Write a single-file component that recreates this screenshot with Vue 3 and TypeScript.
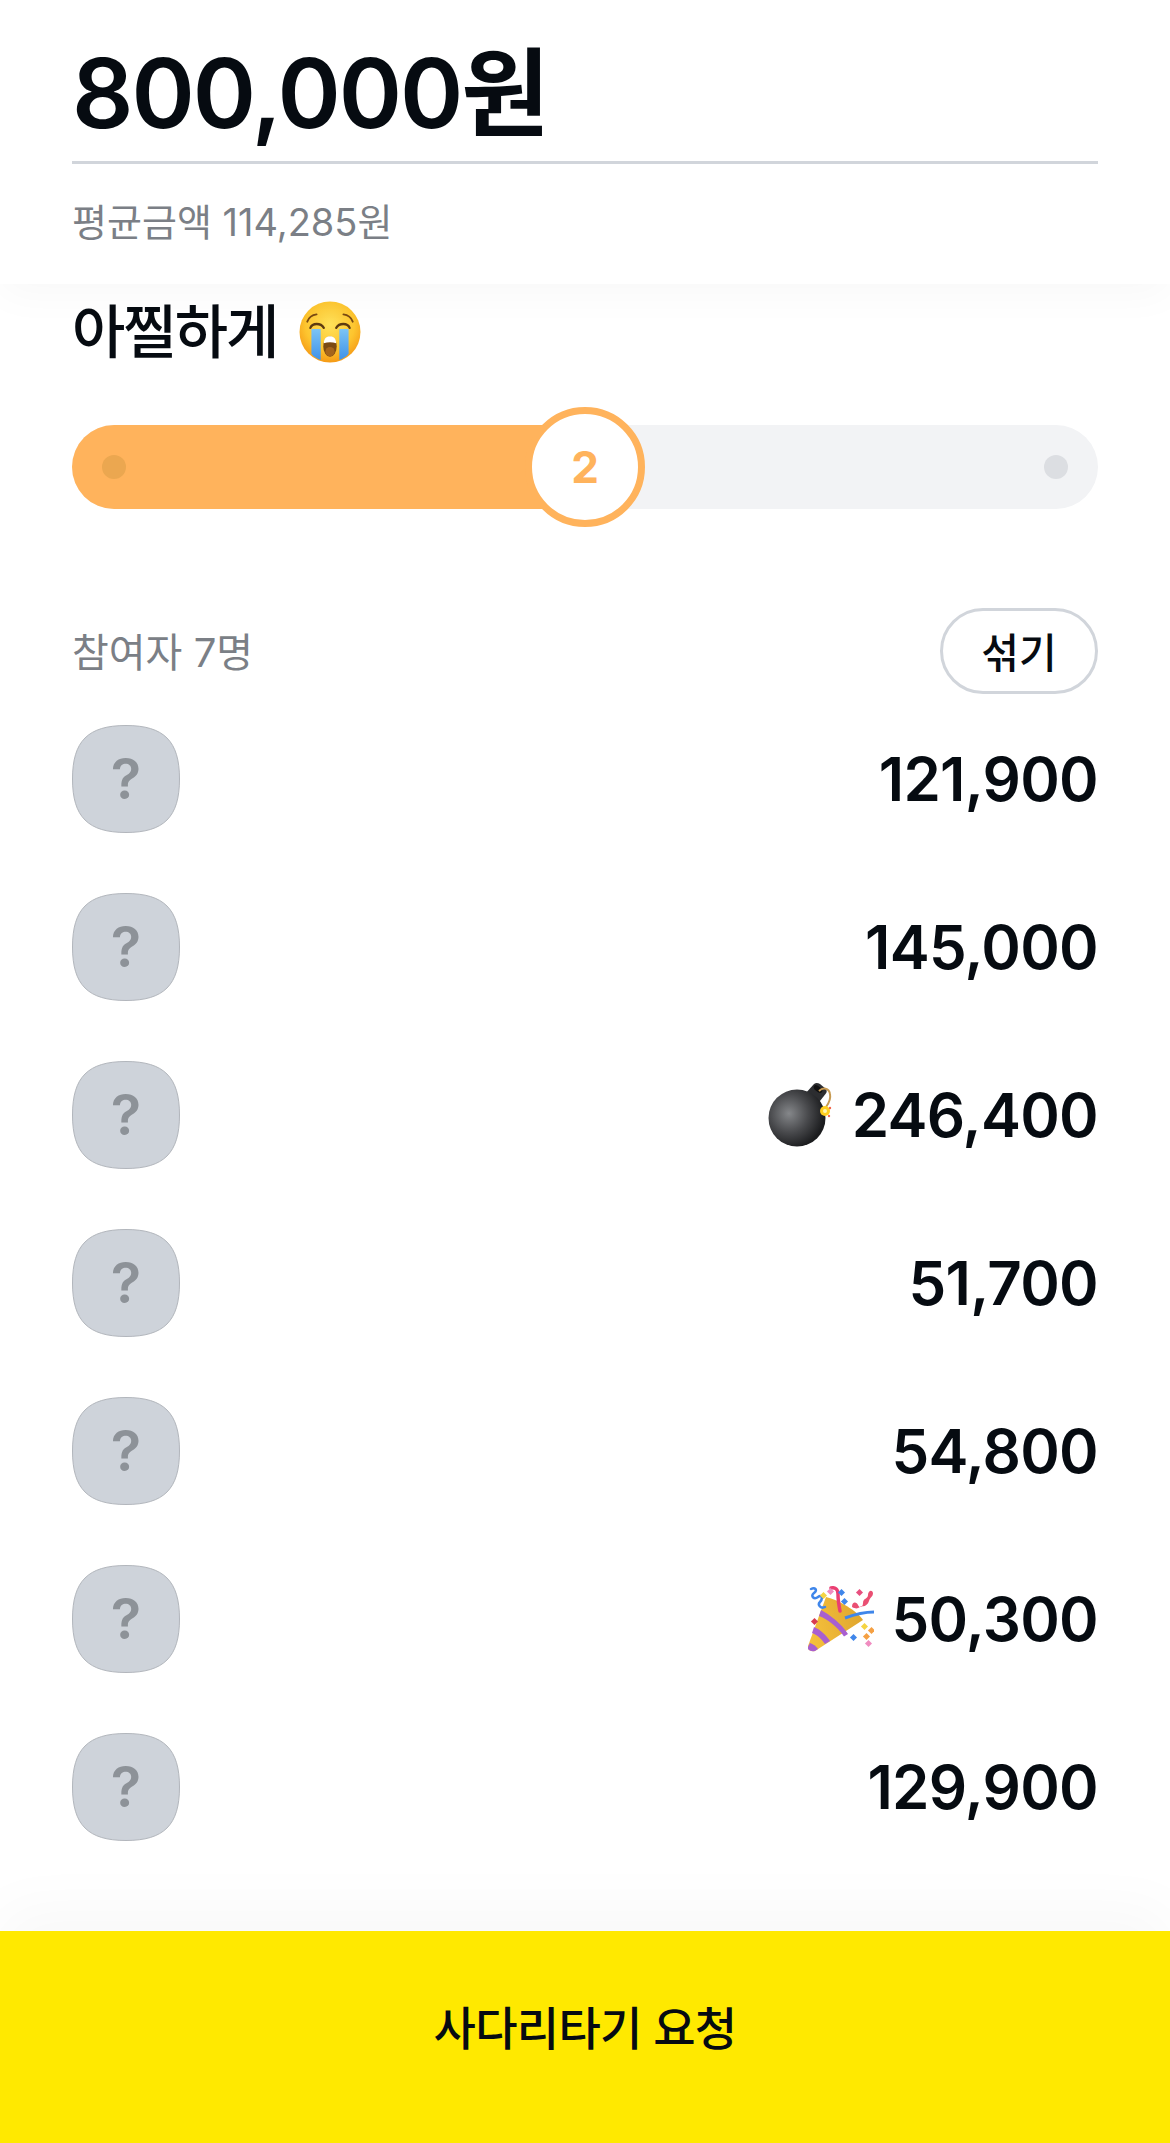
<template>
  <div class="page">
    <header class="summary">
      <h1 class="total">800,000원</h1>
      <p class="average">평균금액 114,285원</p>
    </header>

    <main class="content">
      <h2 class="mode">
        아찔하게
        <svg class="mode-emoji" viewBox="0 0 60 60" aria-hidden="true">
          <defs>
            <radialGradient id="face" cx="50%" cy="38%" r="62%">
              <stop offset="0" stop-color="#ffe15a" />
              <stop offset="0.65" stop-color="#fdc52f" />
              <stop offset="1" stop-color="#f59a16" />
            </radialGradient>
            <linearGradient id="tear" x1="0" y1="0" x2="0" y2="1">
              <stop offset="0" stop-color="#7cc4f5" />
              <stop offset="1" stop-color="#3f92e8" />
            </linearGradient>
          </defs>
          <circle cx="30" cy="30" r="29.5" fill="url(#face)" />
          <path d="M8 20c1.500-4 5-6.500 9-7" fill="none" stroke="#7a4a12" stroke-width="1.800" stroke-linecap="round" />
          <path d="M52 20c-1.500-4-5-6.500-9-7" fill="none" stroke="#7a4a12" stroke-width="1.800" stroke-linecap="round" />
          <path d="M11 26c2-5 10-5 13 0" fill="none" stroke="#5d3a10" stroke-width="2.200" stroke-linecap="round" />
          <path d="M36 26c3-5 11-5 13 0" fill="none" stroke="#5d3a10" stroke-width="2.200" stroke-linecap="round" />
          <path d="M12 27h9v30c-3-1-7-3-9-6z" fill="url(#tear)" />
          <path d="M39 27h9v24c-2 3-6 5-9 6z" fill="url(#tear)" />
          <ellipse cx="30" cy="44" rx="6.500" ry="10" fill="#7b4a14" />
          <path d="M24 41c0-5 2.500-7 6-7s6 2 6 7c-4-1.500-8-1.500-12 0z" fill="#fff" />
          <ellipse cx="30" cy="49" rx="4.500" ry="4.500" fill="#a5641c" />
        </svg>
      </h2>

      <div class="slider">
        <div class="slider-fill" :style="{ width: level * 25 + '%' }"></div>
        <span class="slider-dot start"></span>
        <span class="slider-dot end"></span>
        <div class="slider-thumb" :style="{ left: level * 25 + '%' }">{{ level }}</div>
      </div>

      <div class="list-head">
        <span class="count">참여자 7명</span>
        <button class="shuffle" type="button">섞기</button>
      </div>

      <ul class="players">
        <li v-for="(p, i) in PLAYERS" :key="i" class="player">
          <svg class="avatar" viewBox="0 0 108 108" aria-hidden="true">
            <path
              d="M54 .5C92 .5 107.500 16 107.500 54S92 107.500 54 107.500 .5 92 .5 54 16 .5 54 .5z"
              fill="#ced3da"
              stroke="#b2b6bc"
            />
            <text x="54" y="74" text-anchor="middle" class="avatar-mark">?</text>
          </svg>
          <span class="amount">
            <svg v-if="p.mark === 'bomb'" class="mark" viewBox="0 0 66 66" aria-hidden="true">
              <defs>
                <radialGradient id="bomb" cx="36%" cy="42%" r="62%">
                  <stop offset="0" stop-color="#85878a" />
                  <stop offset="0.55" stop-color="#48494c" />
                  <stop offset="1" stop-color="#1b1c1e" />
                </radialGradient>
              </defs>
              <path d="M37 12l9-10c2-1.500 4-1 6 0l6 5c1 2 1 3-.5 5L48 24z" fill="#2c2d30" />
              <circle cx="29" cy="36" r="28.500" fill="url(#bomb)" />
              <ellipse cx="50" cy="7" rx="5" ry="2.600" fill="#0f0f10" transform="rotate(38 50 7)" />
              <path d="M51 9c4-4 10-3 11 3 1 5-1 9-4 13" fill="none" stroke="#c79a52" stroke-width="2" />
              <circle cx="57" cy="29" r="5" fill="#ffcf1f" />
              <circle cx="57" cy="29" r="2" fill="#fff6b0" />
              <circle cx="62" cy="26" r="1.200" fill="#f2664b" />
              <circle cx="61" cy="34" r="1.200" fill="#f2664b" />
            </svg>
            <svg v-else-if="p.mark === 'party'" class="mark" viewBox="0 0 66 66" aria-hidden="true">
              <defs>
                <linearGradient id="cone" x1="0" y1="0.500" x2="1" y2="0.300">
                  <stop offset="0" stop-color="#f5c13c" />
                  <stop offset="1" stop-color="#dfa52e" />
                </linearGradient>
              </defs>
              <path d="M0 60L18 11c13 3 31 14 37 23L7 65c-4 1-8-1-7-5z" fill="url(#cone)" />
              <path d="M13 24c9 5 20 13 27 24l-4 2.500C29 40 19 33 11 30z" fill="#a85fd0" />
              <path d="M6 41c7 3 12 8 16 14l-5 3c-4-6-8-9-13-11z" fill="#a85fd0" />
              <path d="M2 57c3 1 6 3 8 6l-3 2c-4 1-8-1-7-4z" fill="#a85fd0" />
              <path d="M37 32c8-3 18-6 29-6" fill="none" stroke="#3f86ea" stroke-width="3" />
              <path d="M3 3c4-2 7 1 3 4s0 7 4 4 5 2 2 5 1 7 5 5" fill="none" stroke="#3f86ea" stroke-width="2.500" stroke-linecap="round" />
              <path d="M23 2c4-1 7 1 7 6s1 12 2 17" fill="none" stroke="#ea3f72" stroke-width="3.500" stroke-linecap="round" />
              <path d="M44 21c0-6 5-5 6-2s5 3 5-2 5-4 5-8 4-6 5-2c0 4-3 4-4 8s-5 6-7 5-3 5-10 1z" fill="#ea4f72" />
              <rect x="13" y="7" width="5" height="5" fill="#f5d443" transform="rotate(45 15.500 9.500)" />
              <rect x="20" y="3" width="5" height="5" fill="#f08cc0" transform="rotate(45 22.500 5.500)" />
              <rect x="31" y="4" width="5" height="5" fill="#3f86ea" transform="rotate(45 33.500 6.500)" />
              <rect x="34" y="13" width="5" height="5" fill="#3f86ea" transform="rotate(45 36.500 15.500)" />
              <rect x="49" y="4" width="5" height="5" fill="#e84f7f" transform="rotate(45 51.500 6.500)" />
              <rect x="4" y="33" width="5" height="5" fill="#d83c4f" transform="rotate(45 6.500 35.500)" />
              <rect x="54" y="38" width="5" height="5" fill="#f5d443" transform="rotate(45 56.500 40.500)" />
              <rect x="61" y="42" width="5" height="5" fill="#f5a043" transform="rotate(45 63.500 44.500)" />
              <rect x="56" y="48" width="5" height="5" fill="#f5a043" transform="rotate(45 58.500 50.500)" />
              <rect x="43" y="49" width="5" height="5" fill="#3f86ea" transform="rotate(45 45.500 51.500)" />
              <rect x="58" y="55" width="5" height="5" fill="#f08cc0" transform="rotate(45 60.500 57.500)" />
            </svg>
            {{ p.amount }}
          </span>
        </li>
      </ul>
    </main>

    <button class="request" type="button">사다리타기 요청</button>
  </div>
</template>

<script setup lang="ts">
const level = 2

const PLAYERS: { amount: string; mark?: 'bomb' | 'party' }[] = [
  { amount: '121,900' },
  { amount: '145,000' },
  { amount: '246,400', mark: 'bomb' },
  { amount: '51,700' },
  { amount: '54,800' },
  { amount: '50,300', mark: 'party' },
  { amount: '129,900' },
]
</script>

<style>
html, body { margin: 0; background: #fff; }
</style>

<style scoped>
.page {
  width: 1170px;
  height: 2143px;
  display: flex;
  flex-direction: column;
  overflow: hidden;
  background: #fff;
  color: #060b11;
  font-family: Inter, "Noto Sans CJK KR", sans-serif;
}

/* Summary */
.summary {
  position: relative;
  z-index: 1;
  height: 284px;
  box-sizing: border-box;
  padding: 0 72px;
  background: #fff;
  box-shadow: 0 10px 40px rgba(0, 0, 0, 0.03);
}
.total {
  height: 129px;
  margin: 0;
  padding-top: 32px;
  border-bottom: 3px solid #d1d5db;
  font-size: 96px;
  line-height: 122px;
  font-weight: 600;
  letter-spacing: -2px;
}
.average {
  margin: 33px 0 0;
  font-size: 38px;
  line-height: 50px;
  color: #7b7f86;
}

.content {
  flex: 1;
  padding: 12px 72px 0;
}
.mode {
  display: flex;
  align-items: center;
  gap: 22px;
  margin: 0;
  height: 72px;
  font-size: 58px;
  line-height: 72px;
  font-weight: 500;
  letter-spacing: -2px;
}
.mode-emoji { width: 62px; height: 62px; }

/* Slider */
.slider {
  position: relative;
  height: 84px;
  margin-top: 57px;
  border-radius: 42px;
  background: #f2f3f5;
}
.slider-fill {
  height: 100%;
  border-radius: 42px 0 0 42px;
  background: #ffb35c;
}
.slider-dot {
  position: absolute;
  top: 30px;
  width: 24px;
  height: 24px;
  border-radius: 50%;
}
.slider-dot.start { left: 30px; background: #eba750; }
.slider-dot.end { right: 30px; background: #dcdee2; }
.slider-thumb {
  position: absolute;
  top: -18px;
  width: 120px;
  height: 120px;
  box-sizing: border-box;
  transform: translateX(-50%);
  display: flex;
  align-items: center;
  justify-content: center;
  border: 7px solid #ffb35c;
  border-radius: 50%;
  background: #fff;
  color: #ffb35c;
  font-size: 44px;
  font-weight: 700;
}

/* List */
.list-head {
  display: flex;
  align-items: center;
  justify-content: space-between;
  margin-top: 99px;
}
.count {
  margin-top: -3px;
  font-size: 40px;
  color: #7b7f86;
}
.shuffle {
  width: 158px;
  height: 86px;
  padding: 0 0 2px;
  border: 3px solid #d1d5db;
  border-radius: 43px;
  background: #fff;
  color: #060b11;
  font-family: inherit;
  font-size: 41px;
  font-weight: 500;
}
.players {
  display: flex;
  flex-direction: column;
  gap: 60px;
  margin: 31px 0 0;
  padding: 0;
  list-style: none;
}
.player {
  display: flex;
  align-items: center;
  justify-content: space-between;
}
.avatar { display: block; width: 108px; height: 108px; }
.avatar-mark {
  fill: #8d9298;
  font-size: 56px;
  font-weight: 600;
}
.amount {
  display: flex;
  align-items: center;
  gap: 18px;
  font-size: 60px;
  font-weight: 600;
  letter-spacing: -0.7px;
}
.mark { width: 66px; height: 66px; }

.request {
  position: relative;
  z-index: 1;
  flex: none;
  height: 212px;
  padding: 0 0 24px;
  border: 0;
  background: #ffe900;
  color: #060b11;
  font-family: inherit;
  font-size: 46px;
  font-weight: 500;
  letter-spacing: -0.7px;
  box-shadow: 0 -20px 60px rgba(0, 0, 0, 0.03);
}
</style>
